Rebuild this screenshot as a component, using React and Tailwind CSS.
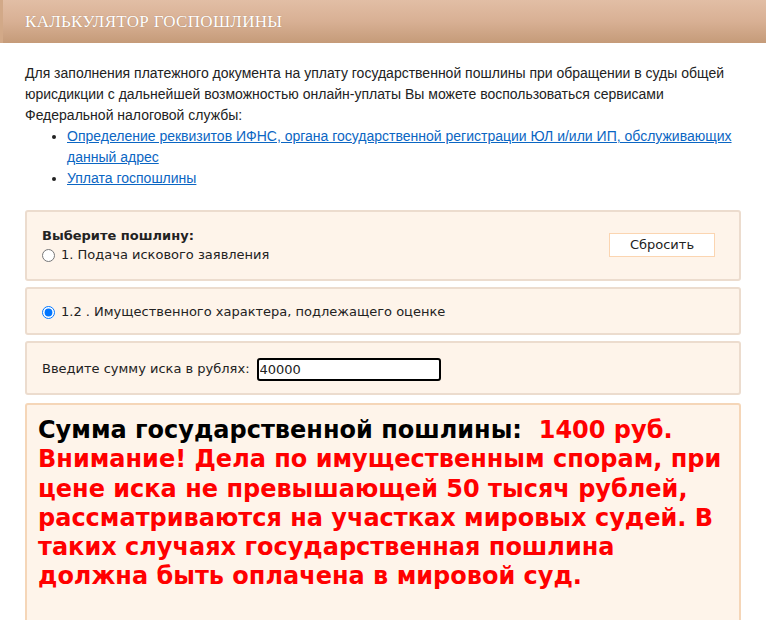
import React, { useState } from 'react';

export default function App() {
  const [duty, setDuty] = useState('1.2');
  const [sum, setSum] = useState('40000');

  return <div className="w-[766px] h-[620px] overflow-hidden bg-white">
      {/* Заголовок */}
      <div className="h-[43px] flex items-center px-[22px] bg-gradient-to-b from-[#e2bea5] via-[#d8b094] to-[#c59b79] border-l-[3px] border-[#d2a988]">
        <h1 className="text-white text-[17px] tracking-[0.3px] [text-shadow:0_0_1px_rgba(120,80,50,0.5)]" style={{ fontFamily: '"Liberation Serif", serif' }}>
          КАЛЬКУЛЯТОР ГОСПОШЛИНЫ
        </h1>
      </div>

      <div className="px-[25px] pt-[20px]">
        {/* Вступление */}
        <div className="text-[14px] leading-[21px] text-[#222]" style={{ fontFamily: '"Liberation Sans", Arial, sans-serif' }}>
          <p>
            Для заполнения платежного документа на уплату государственной пошлины при обращении в суды общей юрисдикции с дальнейшей возможностью онлайн-уплаты Вы можете воспользоваться сервисами Федеральной налоговой службы:
          </p>
          <ul className="list-disc pl-[42px]">
            <li><a href="#" className="text-[#0b66c3] underline">Определение реквизитов ИФНС, органа государственной регистрации ЮЛ и/или ИП, обслуживающих данный адрес</a></li>
            <li><a href="#" className="text-[#0b66c3] underline">Уплата госпошлины</a></li>
          </ul>
        </div>

        <div className="mt-[21px] flex flex-col gap-[6px] text-[13px] text-[#222]" style={{ fontFamily: '"DejaVu Sans", Verdana, sans-serif' }}>
          {/* Выбор пошлины */}
          <div className="h-[71px] bg-[#fef4ea] border-2 border-[#ecdcce] rounded-[3px] pl-[15px] pr-[24px] flex items-center justify-between">
            <div className="pt-[1px]">
              <div className="font-bold leading-[18px]">Выберите пошлину:</div>
              <label className="flex items-center gap-[6px] leading-[20px]">
                <input type="radio" name="d1" checked={duty === '1'} onChange={() => setDuty('1')} className="w-[13px] h-[13px] m-0 accent-[#0075ff]" />
                <span>1. Подача искового заявления</span>
              </label>
            </div>
            <button className="w-[106px] h-[24px] bg-white border border-[#fbd5b1] text-[13px] text-[#222] mt-[-2px]">Сбросить</button>
          </div>

          {/* Подвид */}
          <div className="h-[48px] bg-[#fef4ea] border-2 border-[#ecdcce] rounded-[3px] pl-[15px] flex items-center">
            <label className="flex items-center gap-[6px] mt-[2px]">
              <input type="radio" name="d2" checked={duty === '1.2'} onChange={() => setDuty('1.2')} className="w-[13px] h-[13px] m-0 accent-[#0075ff]" />
              <span>1.2 . Имущественного характера, подлежащего оценке</span>
            </label>
          </div>

          {/* Сумма */}
          <div className="h-[54px] bg-[#fef4ea] border-2 border-[#ecdcce] rounded-[3px] pl-[15px] flex items-center gap-[7px]">
            <span className="mt-[2px]">Введите сумму иска в рублях:</span>
            <input value={sum} onChange={e => setSum(e.target.value)} className="w-[184px] h-[23px] border-2 border-black rounded-[3px] bg-white px-[1px] text-[13px] outline-none mt-[2px]" />
          </div>

          {/* Результат */}
          <div className="mt-[2px] h-[240px] bg-[#fef4ea] border-2 border-[#f5d6b8] rounded-[3px] pl-[11px] pt-[11px] pr-[8px] font-bold text-[24px] leading-[29.3px]">
            <span className="text-black">Сумма государственной пошлины: </span>
            <span className="text-[#ff0000]">&nbsp;1400 руб.</span>
            <div className="text-[#ff0000]">
              Внимание! Дела по имущественным спорам, при цене иска не превышающей 50 тысяч рублей, рассматриваются на участках мировых судей. В таких случаях государственная пошлина должна быть оплачена в мировой суд.
            </div>
          </div>
        </div>
      </div>
    </div>;
}
